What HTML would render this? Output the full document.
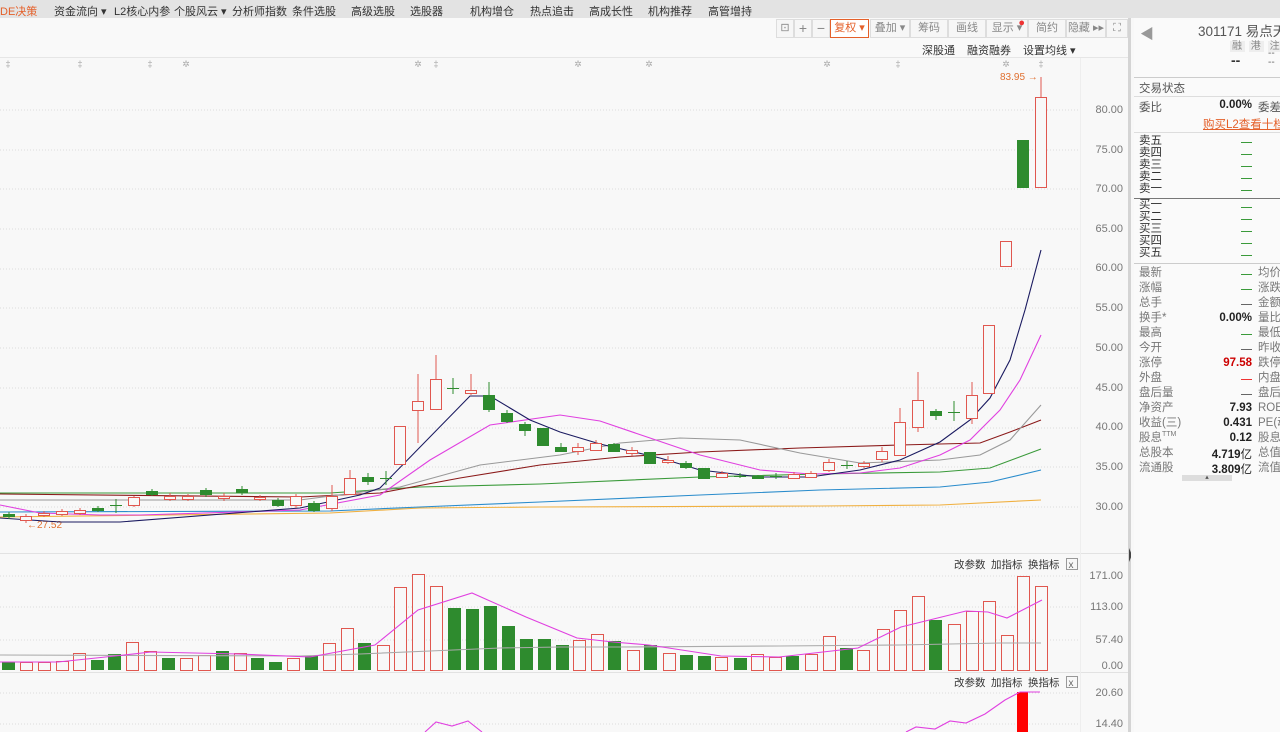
<!DOCTYPE html>
<html><head><meta charset="utf-8">
<style>
*{margin:0;padding:0;box-sizing:border-box}
body{width:1280px;height:732px;overflow:hidden;background:#f8f8f8;font-family:"Liberation Sans","Noto Sans CJK SC",sans-serif;position:relative;color:#333}
.abs{position:absolute;white-space:nowrap}
#top{position:absolute;left:0;top:0;width:1280px;height:18px;background:#e3e3e3}
#top span{position:absolute;top:3px;font-size:11px;color:#333;white-space:nowrap}
.tb{position:absolute;top:19px;height:19px;border:1px solid #ddd;background:#f6f6f6;font-size:11px;color:#888;text-align:center;line-height:17px;white-space:nowrap}
.ax{position:absolute;right:157px;font-size:11px;color:#777;text-align:right}
#rp{position:absolute;left:1134px;top:18px;width:146px;height:714px;background:#fafafa;font-size:11.5px;overflow:hidden}
#rp div{white-space:nowrap}
#rp .l{position:absolute;left:5px;color:#555}
#rp .v{position:absolute;right:28px;font-weight:bold;color:#222;text-align:right}
#rp .r{position:absolute;left:124px;color:#555}
.hl{position:absolute;left:0;width:146px;height:1px;background:#ddd}
.dash{position:absolute;left:107px;width:11px;height:1px;background:#3a9a3a}
</style></head><body>
<div id="top">
<span style="left:0;color:#e4602a">DE决策</span>
<span style="left:54px">资金流向 ▾</span>
<span style="left:114px">L2核心内参</span>
<span style="left:174px">个股风云 ▾</span>
<span style="left:232px">分析师指数</span>
<span style="left:292px">条件选股</span>
<span style="left:351px">高级选股</span>
<span style="left:410px">选股器</span>
<span style="left:470px">机构增仓</span>
<span style="left:530px">热点追击</span>
<span style="left:589px">高成长性</span>
<span style="left:648px">机构推荐</span>
<span style="left:708px">高管增持</span>
</div>
<div class="abs" style="left:0;top:18px;width:1131px;height:40px;background:#f9f9f9;border-bottom:1px solid #e6e6e6"></div>
<div class="tb" style="left:776px;width:18px">⊡</div>
<div class="tb" style="left:794px;width:18px;font-size:14px">+</div>
<div class="tb" style="left:812px;width:18px;font-size:14px">−</div>
<div class="tb" style="left:830px;width:39px;border-color:#e4602a;color:#e4602a;background:#fff">复权 ▾</div>
<div class="tb" style="left:870px;width:40px">叠加 ▾</div>
<div class="tb" style="left:910px;width:38px">筹码</div>
<div class="tb" style="left:948px;width:38px">画线</div>
<div class="tb" style="left:986px;width:42px">显示 ▾<span style="color:#e33;position:absolute;top:-5px;right:2px">●</span></div>
<div class="tb" style="left:1028px;width:38px">简约</div>
<div class="tb" style="left:1066px;width:40px">隐藏 ▸▸</div>
<div class="tb" style="left:1106px;width:22px">⛶</div>
<div class="abs" style="left:922px;top:42px;font-size:11px">深股通</div>
<div class="abs" style="left:967px;top:42px;font-size:11px">融资融券</div>
<div class="abs" style="left:1023px;top:42px;font-size:11px">设置均线 ▾</div>

<svg class="abs" style="left:0;top:0" width="1131" height="732">
<g stroke="#ddd" stroke-dasharray="1,2" stroke-width="1">
<line x1="0" y1="110" x2="1080" y2="110"/><line x1="0" y1="150" x2="1080" y2="150"/><line x1="0" y1="189" x2="1080" y2="189"/><line x1="0" y1="229" x2="1080" y2="229"/><line x1="0" y1="269" x2="1080" y2="269"/><line x1="0" y1="308" x2="1080" y2="308"/><line x1="0" y1="348" x2="1080" y2="348"/><line x1="0" y1="388" x2="1080" y2="388"/><line x1="0" y1="428" x2="1080" y2="428"/><line x1="0" y1="467" x2="1080" y2="467"/><line x1="0" y1="507" x2="1080" y2="507"/>
<line x1="0" y1="576" x2="1080" y2="576"/><line x1="0" y1="607" x2="1080" y2="607"/><line x1="0" y1="640" x2="1080" y2="640"/><line x1="0" y1="693" x2="1080" y2="693"/><line x1="0" y1="724" x2="1080" y2="724"/>
</g>
<line x1="0" y1="553.5" x2="1131" y2="553.5" stroke="#e2e2e2"/>
<line x1="0" y1="672.5" x2="1131" y2="672.5" stroke="#e2e2e2"/>
<line x1="1080.5" y1="58" x2="1080.5" y2="732" stroke="#eee"/>
<g fill="#aaa" font-size="9" text-anchor="middle">
<text x="8" y="67">‡</text><text x="80" y="67">‡</text><text x="150" y="67">‡</text><text x="186" y="67">✲</text><text x="418" y="67">✲</text><text x="436" y="67">‡</text><text x="578" y="67">✲</text><text x="649" y="67">✲</text><text x="827" y="67">✲</text><text x="898" y="67">‡</text><text x="1006" y="67">✲</text><text x="1041" y="67">‡</text>
</g>
<text x="1000" y="80" font-size="10" fill="#e07030">83.95 →</text>
<text x="27" y="528" font-size="10" fill="#e07030">←27.52</text>
<g fill="none" stroke-width="1.1">
<polyline stroke="#f0b040" points="0,517 330,513 420,508 540,507 820,506 940,505 1041,500"/>
<polyline stroke="#2a8ccc" points="0,512 330,511 420,507 540,502 700,495 820,490 940,487 990,482 1041,470"/>
<polyline stroke="#3a9a3a" points="0,493 330,493 420,487 540,484 700,477 820,474 940,472 990,468 1041,449"/>
<polyline stroke="#8b1a1a" points="0,494 300,497 380,493 460,478 540,465 620,457 700,452 800,448 900,445 980,443 1010,432 1041,420"/>
<polyline stroke="#999" points="0,500 300,500 400,487 480,465 560,455 620,443 680,438 740,440 800,453 860,463 940,460 980,455 1010,440 1041,405"/>
<polyline stroke="#e040e0" points="0,505 40,513 100,515 140,515 300,510 380,495 430,460 490,425 560,415 600,421 650,438 700,455 760,470 810,474 860,473 900,468 940,455 970,440 1000,410 1020,380 1041,335"/>
<polyline stroke="#1a1a60" points="0,518 60,522 120,522 300,508 360,495 380,488 470,396 490,396 530,420 560,432 600,444 660,458 700,470 760,477 810,477 860,470 900,460 940,442 970,420 990,398 1010,360 1025,310 1041,250"/>
</g>
<g stroke="#e0574f" fill="#f8f8f8">
<line x1="26" y1="514" x2="26" y2="523"/><rect x="20.5" y="516.5" width="11" height="4"/>
<line x1="44" y1="511" x2="44" y2="517"/><rect x="38.5" y="513.5" width="11" height="2"/>
<line x1="62" y1="509" x2="62" y2="516"/><rect x="56.5" y="511.5" width="11" height="3"/>
<line x1="80" y1="508" x2="80" y2="515"/><rect x="74.5" y="510.5" width="11" height="3"/>
<line x1="134" y1="496" x2="134" y2="507"/><rect x="128.5" y="497.5" width="11" height="8"/>
<line x1="170" y1="493" x2="170" y2="501"/><rect x="164.5" y="496.5" width="11" height="3"/>
<line x1="188" y1="494" x2="188" y2="501"/><rect x="182.5" y="496.5" width="11" height="3"/>
<line x1="224" y1="493" x2="224" y2="501"/><rect x="218.5" y="496.5" width="11" height="2"/>
<line x1="260" y1="495" x2="260" y2="501"/><rect x="254.5" y="497.5" width="11" height="2"/>
<line x1="296" y1="494" x2="296" y2="508"/><rect x="290.5" y="496.5" width="11" height="9"/>
<line x1="332" y1="485" x2="332" y2="511"/><rect x="326.5" y="496.5" width="11" height="12"/>
<line x1="350" y1="470" x2="350" y2="495"/><rect x="344.5" y="478.5" width="11" height="16"/>
<rect x="394.5" y="426.5" width="11" height="38"/>
<line x1="418" y1="374" x2="418" y2="443"/><rect x="412.5" y="401.5" width="11" height="9"/>
<line x1="436" y1="355" x2="436" y2="409"/><rect x="430.5" y="379.5" width="11" height="30"/>
<line x1="471" y1="374" x2="471" y2="395"/><rect x="465.5" y="390.5" width="11" height="3"/>
<line x1="578" y1="443" x2="578" y2="455"/><rect x="572.5" y="447.5" width="11" height="4"/>
<line x1="596" y1="440" x2="596" y2="451"/><rect x="590.5" y="443.5" width="11" height="7"/>
<line x1="632" y1="447" x2="632" y2="456"/><rect x="626.5" y="450.5" width="11" height="3"/>
<line x1="668" y1="456" x2="668" y2="464"/><rect x="662.5" y="460.5" width="11" height="2"/>
<line x1="722" y1="471" x2="722" y2="478"/><rect x="716.5" y="473.5" width="11" height="4"/>
<line x1="794" y1="472" x2="794" y2="479"/><rect x="788.5" y="474.5" width="11" height="4"/>
<line x1="811" y1="471" x2="811" y2="478"/><rect x="805.5" y="473.5" width="11" height="4"/>
<line x1="829" y1="459" x2="829" y2="472"/><rect x="823.5" y="462.5" width="11" height="8"/>
<line x1="864" y1="461" x2="864" y2="468"/><rect x="858.5" y="463.5" width="11" height="3"/>
<line x1="882" y1="447" x2="882" y2="462"/><rect x="876.5" y="451.5" width="11" height="8"/>
<line x1="900" y1="408" x2="900" y2="456"/><rect x="894.5" y="422.5" width="11" height="33"/>
<line x1="918" y1="372" x2="918" y2="432"/><rect x="912.5" y="400.5" width="11" height="27"/>
<line x1="972" y1="382" x2="972" y2="424"/><rect x="966.5" y="395.5" width="11" height="23"/>
<rect x="983.5" y="325.5" width="11" height="68"/>
<rect x="1000.5" y="241.5" width="11" height="25"/>
<line x1="1041" y1="77" x2="1041" y2="97"/><rect x="1035.5" y="97.5" width="11" height="90"/>
</g>
<g stroke="#2e8b2e" fill="#2e8b2e">
<line x1="9" y1="512" x2="9" y2="519"/><rect x="3.5" y="514.5" width="11" height="2"/>
<line x1="98" y1="506" x2="98" y2="512"/><rect x="92.5" y="508.5" width="11" height="2"/>
<line x1="152" y1="489" x2="152" y2="496"/><rect x="146.5" y="491.5" width="11" height="3"/>
<line x1="206" y1="488" x2="206" y2="497"/><rect x="200.5" y="490.5" width="11" height="4"/>
<line x1="242" y1="486" x2="242" y2="495"/><rect x="236.5" y="489.5" width="11" height="3"/>
<line x1="278" y1="498" x2="278" y2="507"/><rect x="272.5" y="500.5" width="11" height="5"/>
<line x1="314" y1="501" x2="314" y2="512"/><rect x="308.5" y="503.5" width="11" height="7"/>
<line x1="368" y1="473" x2="368" y2="485"/><rect x="362.5" y="477.5" width="11" height="4"/>
<line x1="489" y1="382" x2="489" y2="412"/><rect x="483.5" y="395.5" width="11" height="14"/>
<line x1="507" y1="410" x2="507" y2="423"/><rect x="501.5" y="413.5" width="11" height="8"/>
<line x1="525" y1="422" x2="525" y2="436"/><rect x="519.5" y="424.5" width="11" height="6"/>
<rect x="537.5" y="428.5" width="11" height="17"/>
<line x1="561" y1="443" x2="561" y2="452"/><rect x="555.5" y="447.5" width="11" height="4"/>
<line x1="614" y1="443" x2="614" y2="452"/><rect x="608.5" y="444.5" width="11" height="7"/>
<rect x="644.5" y="452.5" width="11" height="11"/>
<line x1="686" y1="461" x2="686" y2="469"/><rect x="680.5" y="463.5" width="11" height="4"/>
<rect x="698.5" y="468.5" width="11" height="10"/>
<line x1="758" y1="475" x2="758" y2="479"/><rect x="752.5" y="476.5" width="11" height="2"/>
<line x1="936" y1="409" x2="936" y2="420"/><rect x="930.5" y="411.5" width="11" height="4"/>
<rect x="1017.5" y="140.5" width="11" height="47"/>
<line x1="116" y1="499" x2="116" y2="513"/><line x1="110" y1="505.5" x2="122" y2="505.5"/>
<line x1="386" y1="471" x2="386" y2="485"/><line x1="380" y1="478.5" x2="392" y2="478.5"/>
<line x1="453" y1="378" x2="453" y2="394"/><line x1="447" y1="388.5" x2="459" y2="388.5"/>
<line x1="740" y1="473" x2="740" y2="478"/><line x1="734" y1="476.5" x2="746" y2="476.5"/>
<line x1="776" y1="473" x2="776" y2="479"/><line x1="770" y1="476.5" x2="782" y2="476.5"/>
<line x1="847" y1="461" x2="847" y2="469"/><line x1="841" y1="465.5" x2="853" y2="465.5"/>
<line x1="954" y1="401" x2="954" y2="421"/><line x1="948" y1="412.5" x2="960" y2="412.5"/>
</g>
<g fill="#f8f8f8" stroke="#e0574f">
<rect x="20.5" y="662.5" width="12" height="8"/><rect x="38.5" y="662.5" width="12" height="8"/><rect x="56.5" y="661.5" width="12" height="9"/><rect x="73.5" y="653.5" width="12" height="17"/><rect x="126.5" y="642.5" width="12" height="28"/><rect x="144.5" y="651.5" width="12" height="19"/><rect x="180.5" y="658.5" width="12" height="12"/><rect x="198.5" y="655.5" width="12" height="15"/><rect x="234.5" y="653.5" width="12" height="17"/><rect x="287.5" y="658.5" width="12" height="12"/><rect x="323.5" y="643.5" width="12" height="27"/><rect x="341.5" y="628.5" width="12" height="42"/><rect x="377.5" y="645.5" width="12" height="25"/><rect x="394.5" y="587.5" width="12" height="83"/><rect x="412.5" y="574.5" width="12" height="96"/><rect x="430.5" y="586.5" width="12" height="84"/><rect x="573.5" y="640.5" width="12" height="30"/><rect x="591.5" y="634.5" width="12" height="36"/><rect x="627.5" y="650.5" width="12" height="20"/><rect x="663.5" y="653.5" width="12" height="17"/><rect x="715.5" y="657.5" width="12" height="13"/><rect x="751.5" y="654.5" width="12" height="16"/><rect x="769.5" y="657.5" width="12" height="13"/><rect x="805.5" y="654.5" width="12" height="16"/><rect x="823.5" y="636.5" width="12" height="34"/><rect x="857.5" y="650.5" width="12" height="20"/><rect x="877.5" y="629.5" width="12" height="41"/><rect x="894.5" y="610.5" width="12" height="60"/><rect x="912.5" y="596.5" width="12" height="74"/><rect x="948.5" y="624.5" width="12" height="46"/><rect x="966.5" y="611.5" width="12" height="59"/><rect x="983.5" y="601.5" width="12" height="69"/><rect x="1001.5" y="635.5" width="12" height="35"/><rect x="1017.5" y="576.5" width="12" height="94"/><rect x="1035.5" y="586.5" width="12" height="84"/>
</g>
<g fill="#2e8b2e">
<rect x="2" y="662" width="13" height="8"/><rect x="91" y="660" width="13" height="10"/><rect x="108" y="654" width="13" height="16"/><rect x="162" y="658" width="13" height="12"/><rect x="216" y="651" width="13" height="19"/><rect x="251" y="658" width="13" height="12"/><rect x="269" y="662" width="13" height="8"/><rect x="305" y="656" width="13" height="14"/><rect x="358" y="643" width="13" height="27"/><rect x="448" y="608" width="13" height="62"/><rect x="466" y="609" width="13" height="61"/><rect x="484" y="606" width="13" height="64"/><rect x="502" y="626" width="13" height="44"/><rect x="520" y="639" width="13" height="31"/><rect x="538" y="639" width="13" height="31"/><rect x="556" y="645" width="13" height="25"/><rect x="608" y="641" width="13" height="29"/><rect x="644" y="645" width="13" height="25"/><rect x="680" y="655" width="13" height="15"/><rect x="698" y="656" width="13" height="14"/><rect x="734" y="658" width="13" height="12"/><rect x="786" y="656" width="13" height="14"/><rect x="840" y="648" width="13" height="22"/><rect x="929" y="620" width="13" height="50"/>
</g>
<g fill="none" stroke-width="1.1">
<polyline stroke="#aaa" points="0,655 300,656 360,654 430,651 500,648 560,647 620,647 780,646 900,645 1000,643 1041,643"/>
<polyline stroke="#e040e0" points="0,662 58,662 115,656 151,652 238,654 310,657 375,645 418,610 472,593 526,617 577,638 613,642 649,645 721,656 779,657 858,648 901,627 966,611 988,612 1007,618 1042,600"/>
</g>
<rect x="1017" y="692" width="11" height="40" fill="#f00"/>
<g fill="none" stroke="#e040e0" stroke-width="1.1">
<polyline points="425,732 436,722 452,726 468,721 482,732"/>
<polyline points="906,732 916,727 935,729 950,721 966,723 985,714 1005,700 1020,692 1040,692"/>
</g>
<g font-size="10.5" fill="#333">
<text x="954" y="568">改参数</text><text x="991" y="568">加指标</text><text x="1028" y="568">换指标</text>
<text x="954" y="686">改参数</text><text x="991" y="686">加指标</text><text x="1028" y="686">换指标</text>
</g>
<rect x="1066.5" y="558.5" width="11" height="11" fill="none" stroke="#999"/><text x="1068.5" y="568" font-size="10" fill="#666">x</text>
<rect x="1066.5" y="676.5" width="11" height="11" fill="none" stroke="#999"/><text x="1068.5" y="686" font-size="10" fill="#666">x</text>
<rect x="1128" y="18" width="3" height="714" fill="#d4d4d4"/>
<path d="M1129 548 L1132 555 L1129 562 Z" fill="#444"/>
</svg>
<div class="ax" style="top:104px">80.00</div><div class="ax" style="top:144px">75.00</div><div class="ax" style="top:183px">70.00</div><div class="ax" style="top:223px">65.00</div><div class="ax" style="top:262px">60.00</div><div class="ax" style="top:302px">55.00</div><div class="ax" style="top:342px">50.00</div><div class="ax" style="top:382px">45.00</div><div class="ax" style="top:421px">40.00</div><div class="ax" style="top:461px">35.00</div><div class="ax" style="top:501px">30.00</div>
<div class="ax" style="top:570px">171.00</div><div class="ax" style="top:601px">113.00</div><div class="ax" style="top:634px">57.40</div><div class="ax" style="top:660px">0.00</div><div class="ax" style="top:687px">20.60</div><div class="ax" style="top:718px">14.40</div>

<div id="rp">
<div class="abs" style="left:6px;top:6px;color:#999;font-size:14px">◀</div>
<div class="abs" style="left:64px;top:2px;font-size:13.5px;color:#555">301171 易点天</div>
<div class="abs" style="left:96px;top:19px;font-size:10px;color:#888;letter-spacing:1px"><span style="background:#eee;padding:0 2px">融</span> <span style="background:#eee;padding:0 2px">港</span> <span style="background:#eee;padding:0 2px">注</span></div>
<div class="abs" style="left:97px;top:34px;font-size:14px;font-weight:bold;color:#333">--</div>
<div class="abs" style="left:134px;top:31px;font-size:10px;color:#666;line-height:9px">--<br>--</div>
<div class="hl" style="top:59px;background:#ccc"></div>
<div class="l" style="top:62px">交易状态</div>
<div class="hl" style="top:78px"></div>
<div class="l" style="top:81px">委比</div><div class="v" style="top:81px">0.00%</div><div class="r" style="top:81px">委差</div>
<div class="abs" style="left:69px;top:98px;color:#e4602a;text-decoration:underline">购买L2查看十档</div>
<div class="hl" style="top:114px"></div>
<div class="l" style="top:117px;line-height:12px;color:#333">卖五<br>卖四<br>卖三<br>卖二<br>卖一</div>
<div class="dash" style="top:124px"></div><div class="dash" style="top:136px"></div><div class="dash" style="top:148px"></div><div class="dash" style="top:160px"></div><div class="dash" style="top:172px"></div>
<div class="hl" style="top:180px;background:#777"></div>
<div class="l" style="top:181px;line-height:12px;color:#333">买一<br>买二<br>买三<br>买四<br>买五</div>
<div class="dash" style="top:189px"></div><div class="dash" style="top:201px"></div><div class="dash" style="top:213px"></div><div class="dash" style="top:225px"></div><div class="dash" style="top:237px"></div>
<div class="hl" style="top:245px;background:#ccc"></div>
<div class="l" style="top:248px;line-height:15px;color:#777">最新<br>涨幅<br>总手<br>换手*<br>最高<br>今开<br>涨停<br>外盘<br>盘后量<br>净资产<br>收益(三)<br>股息<sup style="font-size:7px;line-height:0">TTM</sup><br>总股本<br>流通股</div>
<div class="r" style="top:248px;line-height:15px;color:#777">均价<br>涨跌<br>金额<br>量比<br>最低<br>昨收<br>跌停<br>内盘<br>盘后<br>ROE<br>PE(动<br>股息<br>总值<br>流值</div>
<div class="dash" style="top:256px"></div><div class="dash" style="top:271px"></div><div class="dash" style="top:286px;background:#666"></div>
<div class="v" style="top:294px">0.00%</div>
<div class="dash" style="top:316px"></div><div class="dash" style="top:331px;background:#666"></div>
<div class="v" style="top:339px;color:#c00">97.58</div>
<div class="dash" style="top:361px;background:#e33"></div><div class="dash" style="top:376px;background:#666"></div>
<div class="v" style="top:384px">7.93</div>
<div class="v" style="top:399px">0.431</div>
<div class="v" style="top:414px">0.12</div>
<div class="v" style="top:428px">4.719<span style="font-weight:normal">亿</span></div>
<div class="v" style="top:443px">3.809<span style="font-weight:normal">亿</span></div>
<div class="abs" style="left:48px;top:457px;width:50px;height:6px;background:#ddd;font-size:7px;text-align:center;line-height:6px;color:#555">▴</div>
</div>
</body></html>
